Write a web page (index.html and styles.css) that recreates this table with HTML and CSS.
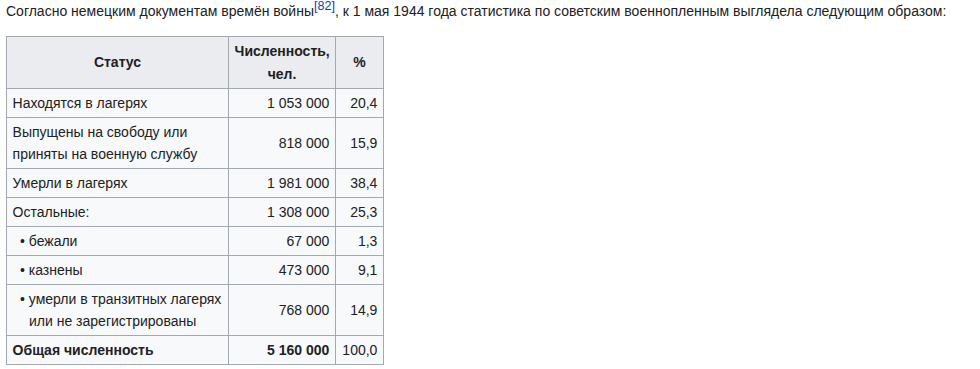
FILE: index.html
```html
<!DOCTYPE html>
<html lang="ru">
<head>
<meta charset="utf-8">
<link rel="stylesheet" href="styles.css">
</head>
<body>
<div class="content">
<p class="intro">Согласно немецким документам времён войны<sup class="ref"><a href="#">[82]</a></sup>, к 1 мая 1944 года статистика по советским военнопленным выглядела следующим образом:</p>
<table class="wikitable">
<colgroup><col class="c1"><col class="c2"><col class="c3"></colgroup>
<thead>
<tr><th>Статус</th><th>Численность, чел.</th><th>%</th></tr>
</thead>
<tbody>
<tr><td>Находятся в лагерях</td><td class="num">1 053 000</td><td class="num">20,4</td></tr>
<tr><td>Выпущены на свободу или приняты на военную службу</td><td class="num">818 000</td><td class="num">15,9</td></tr>
<tr><td>Умерли в лагерях</td><td class="num">1 981 000</td><td class="num">38,4</td></tr>
<tr><td>Остальные:</td><td class="num">1 308 000</td><td class="num">25,3</td></tr>
<tr><td class="sub">• бежали</td><td class="num">67 000</td><td class="num">1,3</td></tr>
<tr><td class="sub">• казнены</td><td class="num">473 000</td><td class="num">9,1</td></tr>
<tr><td class="sub">• умерли в транзитных лагерях или не зарегистрированы</td><td class="num">768 000</td><td class="num">14,9</td></tr>
<tr><td><b>Общая численность</b></td><td class="num"><b>5 160 000</b></td><td class="num">100,0</td></tr>
</tbody>
</table>
</div>
</body>
</html>
```
FILE: styles.css
```css
html, body {
  margin: 0;
  padding: 0;
  background: #ffffff;
}
.content {
  padding: 0 6px;
  font-family: "Liberation Sans", Arial, sans-serif;
  font-size: 14px;
  line-height: 1.6;
  color: #202122;
}
.intro {
  margin: 0 0 14px 0;
}
.ref {
  font-size: 90%;
  line-height: 1;
  vertical-align: super;
}
.ref a {
  color: #0645ad;
  text-decoration: none;
}
.wikitable {
  border-collapse: collapse;
  table-layout: fixed;
  width: 377px;
  background: #f8f9fa;
  border: 1px solid #a2a9b1;
  color: #202122;
}
.c1 { width: 222px; }
.c2 { width: 107px; }
.c3 { width: 48px; }
.wikitable th,
.wikitable td {
  border: 1px solid #a2a9b1;
  padding: 0.2em 0.4em;
}
.wikitable th {
  background: #eaecf0;
  font-weight: bold;
  text-align: center;
}
.wikitable td {
  text-align: left;
}
.wikitable td.num {
  text-align: right;
}
.wikitable td.sub {
  padding-left: 22px;
  text-indent: -9px;
}
```
